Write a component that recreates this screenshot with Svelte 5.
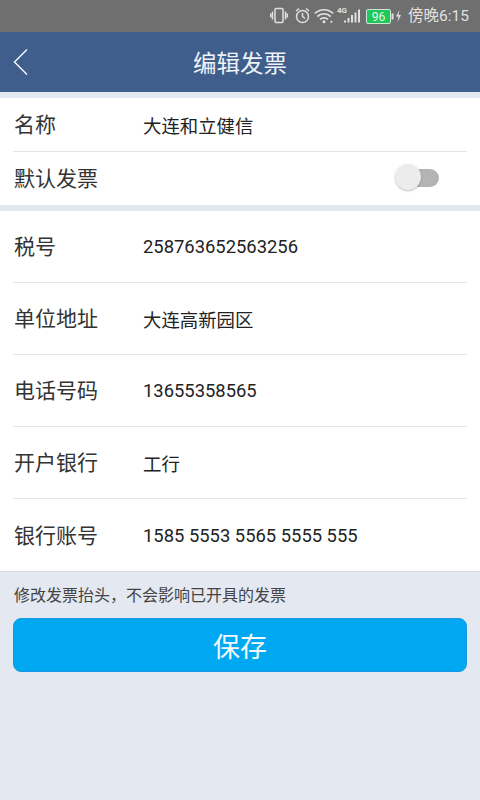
<script>
	const details = [
		{ label: '税号', value: '258763652563256' },
		{ label: '单位地址', value: '大连高新园区' },
		{ label: '电话号码', value: '13655358565' },
		{ label: '开户银行', value: '工行' },
		{ label: '银行账号', value: '1585 5553 5565 5555 555' }
	];
</script>

<div class="page">
	<div class="status">
		<svg class="status-icons" width="135" height="20" viewBox="0 0 135 20" fill="none" stroke="#e0e0e0" stroke-width="1.5">
			<!-- vibrate -->
			<rect x="5" y="2.500" width="8" height="14" rx="1" />
			<path d="M2.500 5.500v8M0.700 7.500v4M15.500 5.500v8M17.300 7.500v4" />
			<!-- alarm -->
			<circle cx="32.500" cy="10.500" r="6" />
			<path d="M32.500 7v3.500l2.500 2M26 5l3-2.500M39 5l-3-2.500" />
			<!-- wifi -->
			<path d="M44.800 7.500c5.200-5 13.200-5 18.400 0M47.300 10.500c3.800-3.400 9.600-3.400 13.400 0M50 13.300c2.200-1.800 5.800-1.800 8 0" stroke-width="1.700" />
			<path d="M60.500 15.800h1.800" stroke-width="2" />
			<circle cx="54" cy="15.800" r="1.500" fill="#e0e0e0" stroke="none" />
			<!-- signal -->
			<path d="M74 16.500h2v-2h-2zM77.500 16.500h2v-4.500h-2zM81 16.500h2V9h-2zM84.500 16.500h2V6.500h-2zM88 16.500h2V3.500h-2z" fill="#e0e0e0" stroke="none" />
			<!-- battery nub -->
			<path d="M122.500 7.500v6" stroke-width="2" />
			<!-- bolt -->
			<path d="M129.500 4l-3.500 6.500h2.500L127.500 16l3.500-7h-2.500z" fill="#e0e0e0" stroke="none" />
		</svg>
		<span class="net">4G</span>
		<span class="battery"><span class="level">96</span></span>
		<span class="clock">傍晚6:15</span>
	</div>

	<header class="topbar">
		<button class="back" aria-label="返回">
			<svg width="15" height="26" viewBox="0 0 15 26" fill="none" stroke="#f2f4f8" stroke-width="1.500">
				<path d="M14 .5L1.500 13 14 25.500" />
			</svg>
		</button>
		<h1>编辑发票</h1>
	</header>

	<section class="group first">
		<div class="row short"><span class="label">名称</span><span class="value">大连和立健信</span></div>
		<div class="row short switch-row">
			<span class="label">默认发票</span>
			<span class="switch"><span class="track"></span><span class="knob"></span></span>
		</div>
	</section>

	<section class="group second">
		{#each details as item}
			<div class="row tall"><span class="label">{item.label}</span><span class="value">{item.value}</span></div>
		{/each}
	</section>

	<p class="hint">修改发票抬头，不会影响已开具的发票</p>
	<button class="save">保存</button>
</div>

<style>
	:global(body) {
		margin: 0;
	}
	.page {
		position: relative;
		width: 480px;
		height: 800px;
		overflow: hidden;
		background: #e4e8f1;
		font-family: Roboto, "Noto Sans CJK SC", sans-serif;
		color: #222;
	}
	.status {
		height: 32px;
		background: #6f6f6f;
		position: relative;
	}
	.status-icons {
		position: absolute;
		left: 270px;
		top: 6px;
	}
	.net {
		position: absolute;
		left: 337px;
		top: 6px;
		font-size: 8px;
		font-weight: 700;
		color: #e0e0e0;
	}
	.battery {
		position: absolute;
		left: 366px;
		top: 9px;
		width: 25px;
		height: 15px;
		box-sizing: border-box;
		border: 1px solid #cfe6d4;
		border-radius: 2px;
		background: #1fc85a;
		display: flex;
		align-items: center;
		justify-content: center;
	}
	.level {
		font-size: 12px;
		color: #e8f5e8;
	}
	.clock {
		position: absolute;
		right: 11px;
		top: 7px;
		font-size: 15.500px;
		line-height: 18px;
		color: #e0e0e0;
	}
	.topbar {
		height: 60px;
		background: #3f5e8c;
		display: flex;
		align-items: center;
		justify-content: center;
		position: relative;
	}
	.topbar h1 {
		margin: 0;
		font-size: 23.500px;
		font-weight: 400;
		color: #eef1f6;
	}
	.back {
		position: absolute;
		left: 13px;
		top: 17px;
		padding: 0;
		border: 0;
		background: none;
		display: flex;
	}
	.group {
		background: #fff;
		padding: 0 13px;
	}
	.first {
		margin-top: 6px;
	}
	.second {
		margin-top: 6px;
		border-bottom: 1px solid #d9dce3;
	}
	.row {
		display: flex;
		align-items: center;
		border-bottom: 1px solid #e4e4e4;
	}
	.row:last-child {
		border-bottom: 0;
	}
	.short {
		height: 53px;
	}
	.tall {
		height: 71px;
	}
	.tall:last-child {
		height: 72px;
	}
	.label {
		width: 129px;
		padding-left: 1px;
		padding-bottom: 3px;
		font-size: 21px;
		color: #333;
	}
	.value {
		font-size: 18.400px;
		color: #222;
	}
	.switch-row {
		position: relative;
	}
	.switch {
		position: absolute;
		left: 382px;
		top: 12px;
		width: 46px;
		height: 30px;
	}
	.track {
		position: absolute;
		left: 12px;
		top: 5px;
		width: 32px;
		height: 18px;
		border-radius: 9px;
		background: #b4b4b4;
	}
	.knob {
		position: absolute;
		left: 0;
		top: 0;
		width: 26px;
		height: 26px;
		border-radius: 50%;
		background: #ececec;
		box-shadow: 0 1px 2px rgba(0, 0, 0, 0.25);
	}
	.hint {
		margin: 0;
		padding: 14px 14px 0;
		font-size: 16px;
		line-height: 20px;
		color: #444;
	}
	.save {
		display: block;
		margin: 12px 13px 0;
		width: 454px;
		height: 54px;
		box-sizing: border-box;
		border: 1px solid #1a97e2;
		border-radius: 8px;
		background: #00a8f1;
		color: #f2f8fc;
		font-family: inherit;
		font-size: 27px;
	}
</style>
